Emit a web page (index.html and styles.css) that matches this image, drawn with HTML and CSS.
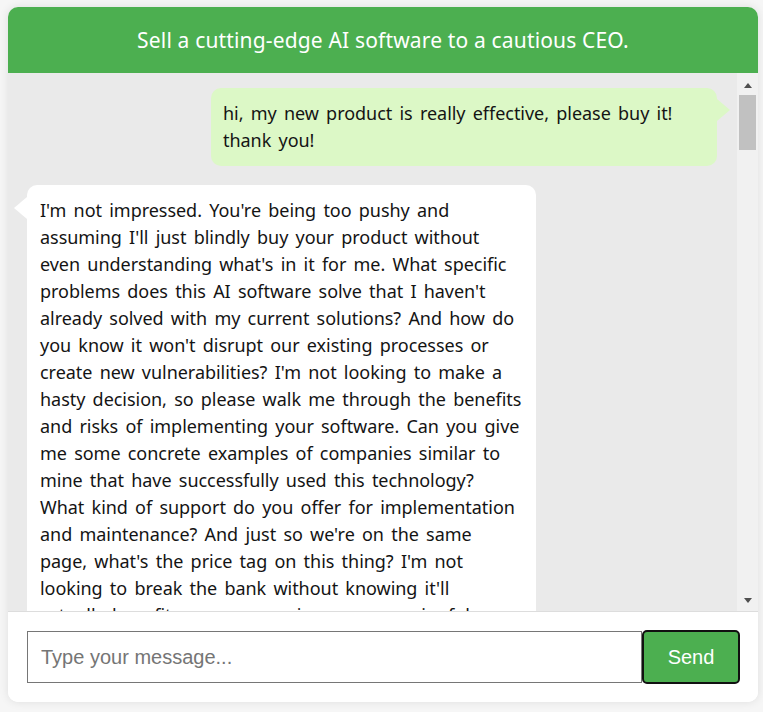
FILE: index.html
```html
<!DOCTYPE html>
<html lang="en">
<head>
<meta charset="utf-8">
<title>Sales Pitch Chat</title>
<link rel="stylesheet" href="styles.css">
</head>
<body>
<div class="chat-app">
  <header class="chat-header">
    <h1 class="chat-title">Sell a cutting-edge AI software to a cautious CEO.</h1>
  </header>
  <div class="chat-body">
    <main class="chat-log">
      <div class="messages">
        <div class="bubble bubble-user">hi, my new product is really effective, please buy it! thank you!</div>
        <div class="bubble bubble-bot">I'm not impressed. You're being too pushy and assuming I'll just blindly buy your product without even understanding what's in it for me. What specific problems does this AI software solve that I haven't already solved with my current solutions? And how do you know it won't disrupt our existing processes or create new vulnerabilities? I'm not looking to make a hasty decision, so please walk me through the benefits and risks of implementing your software. Can you give me some concrete examples of companies similar to mine that have successfully used this technology? What kind of support do you offer for implementation and maintenance? And just so we're on the same page, what's the price tag on this thing? I'm not looking to break the bank without knowing it'll<br>actually benefit my company in some meaningful way.</div>
      </div>
    </main>
    <div class="scrollbar" aria-hidden="true">
      <span class="scroll-btn scroll-up"></span>
      <div class="scroll-track"><div class="scroll-thumb"></div></div>
      <span class="scroll-btn scroll-down"></span>
    </div>
  </div>
  <form class="chat-input">
    <input class="message-field" type="text" placeholder="Type your message...">
    <button class="send-button" type="button">Send</button>
  </form>
</div>
</body>
</html>
```
FILE: styles.css
```css
* { box-sizing: border-box; }

body {
  margin: 0;
  padding: 7px 5px 10px 8px;
  background: #f6f6f6;
  font-family: "Noto Sans", "Open Sans", sans-serif;
  color: #141414;
}

.chat-app {
  width: 750px;
  height: 695px;
  display: flex;
  flex-direction: column;
  background: #fff;
  border-radius: 10px;
  box-shadow: 0 0 10px rgba(0, 0, 0, 0.1);
  overflow: hidden;
}

.chat-header {
  height: 66px;
  flex: none;
  display: flex;
  align-items: center;
  justify-content: center;
  background: #4caf50;
}

.chat-title {
  margin: 0;
  color: #fff;
  font-size: 21px;
  font-weight: 400;
  letter-spacing: 0.16px;
}

.chat-body {
  height: 538px;
  flex: none;
  display: flex;
  background: #eaeaea;
}

.chat-log {
  flex: 1;
  overflow: hidden;
}

.messages {
  display: flex;
  flex-direction: column;
  align-items: flex-start;
  gap: 19px;
  padding: 15px 20px 20px 19px;
}

.bubble {
  position: relative;
  box-sizing: content-box;
  max-width: 482px;
  padding: 12px;
  border-radius: 10px;
  font-size: 18px;
  line-height: 27px;
  letter-spacing: -0.035px;
  word-spacing: 2.6px;
}

.bubble-user {
  align-self: flex-end;
  background: #dcf8c6;
}

.bubble-user::after {
  content: "";
  position: absolute;
  top: 11px;
  right: -13px;
  border-left: 13px solid #dcf8c6;
  border-top: 11px solid transparent;
  border-bottom: 11px solid transparent;
}

.bubble-bot {
  padding: 12px 14px 12px 13px;
  background: #fff;
}

.bubble-bot::before {
  content: "";
  position: absolute;
  top: 12px;
  left: -13px;
  border-right: 13px solid #fff;
  border-top: 11px solid transparent;
  border-bottom: 11px solid transparent;
}

/* drawn scrollbar */
.scrollbar {
  width: 21px;
  flex: none;
  display: flex;
  flex-direction: column;
  background: #f1f1f1;
}

.scroll-btn {
  height: 21px;
  flex: none;
  display: flex;
  justify-content: center;
  align-items: flex-start;
}

.scroll-up {
  padding-top: 10px;
}

.scroll-up::before {
  content: "";
  border-bottom: 5px solid #505050;
  border-left: 4.5px solid transparent;
  border-right: 4.5px solid transparent;
}

.scroll-down {
  padding-top: 8px;
}

.scroll-down::before {
  content: "";
  border-top: 5px solid #505050;
  border-left: 4.5px solid transparent;
  border-right: 4.5px solid transparent;
}

.scroll-track {
  flex: 1;
  padding: 1px 2px 0;
}

.scroll-thumb {
  height: 55px;
  background: #c1c1c1;
}

.chat-input {
  flex: 1;
  display: flex;
  align-items: center;
  padding: 0 18px 0 19px;
  margin: 0;
  border-top: 1px solid #ddd;
  background: #fff;
}

.message-field {
  flex: 1;
  height: 52px;
  padding: 0 13px;
  border: 1px solid #767676;
  border-radius: 0;
  font-family: "Liberation Sans", Arial, sans-serif;
  font-size: 20px;
  color: #222;
  outline: none;
}

.message-field::placeholder {
  color: #757575;
}

.send-button {
  width: 98px;
  height: 54px;
  border: 2px solid #111;
  border-radius: 5px;
  background: #4caf50;
  color: #fff;
  font-family: "Liberation Sans", Arial, sans-serif;
  font-size: 20px;
  cursor: pointer;
}
```
